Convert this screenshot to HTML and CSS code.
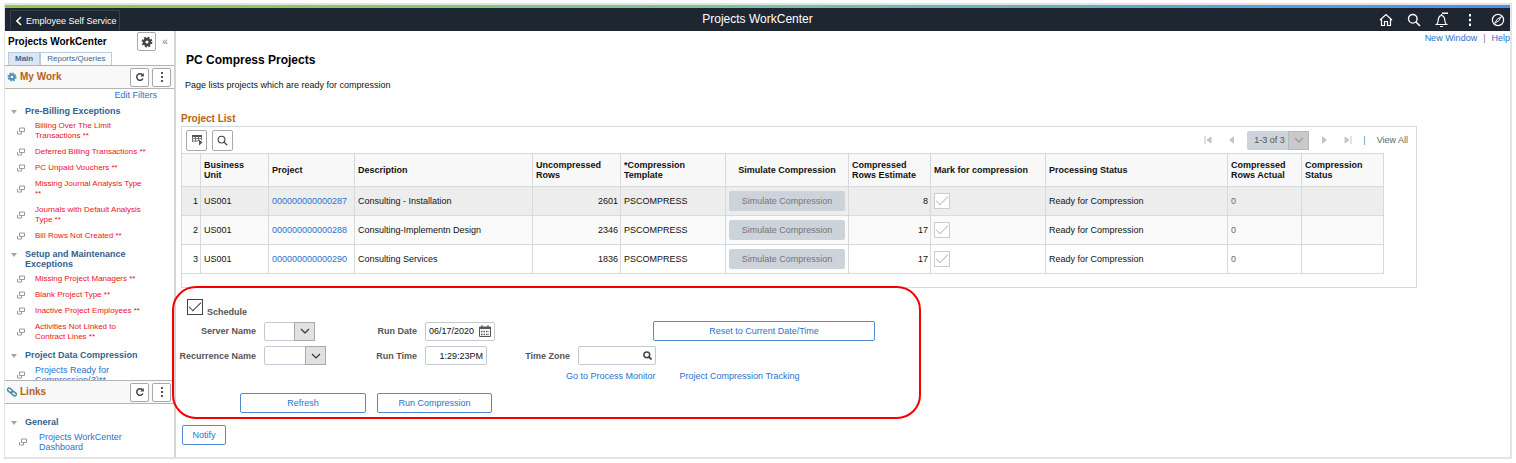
FILE: index.html
```html
<!DOCTYPE html>
<html lang="en">
<head>
    <meta charset="UTF-8">
    <meta name="viewport" content="width=device-width, initial-scale=1.0">
    <title>Projects WorkCenter</title>
    <link rel="stylesheet" href="styles.css">
</head>
<body>
    <!-- Shared icons -->
    <svg class="defs" width="0" height="0">
        <symbol id="related" viewBox="0 0 8 8"><path d="M2.500 1h5v3.500h-5z M.5 4v3h4V5" fill="none" stroke="#999"/></symbol>
        <symbol id="reload" viewBox="0 0 10 10"><path d="M8 6.500A3.300 3.300 0 1 1 7.500 2.800" fill="none" stroke="#444" stroke-width="1.500"/><path d="M8.800 1v3.600H5.200z" fill="#444"/></symbol>
        <symbol id="dots" viewBox="0 0 10 10"><path d="M4 0h2v2H4zM4 4h2v2H4zM4 8h2v2H4z" fill="#555"/></symbol>
        <symbol id="chevron" viewBox="0 0 10 6"><path d="M1 1l4 4 4-4" fill="none" stroke="currentColor" stroke-width="1.200"/></symbol>
        <symbol id="gear" viewBox="0 0 12 12"><circle cx="6" cy="6" r="2.900" fill="none" stroke="currentColor" stroke-width="2.600"/><circle cx="6" cy="6" r="4.600" fill="none" stroke="currentColor" stroke-width="1.600" stroke-dasharray="2 1.610"/></symbol>
        <symbol id="search" viewBox="0 0 14 14"><circle cx="5.800" cy="5.800" r="4.300" fill="none" stroke="currentColor" stroke-width="1.400"/><path d="M9 9l4 4" stroke="currentColor" stroke-width="1.600"/></symbol>
    </svg>

    <div class="frame">
        <header class="banner">
            <button class="back" type="button">
                <svg width="6" height="10" viewBox="0 0 6 10"><path d="M5 1L1 5l4 4" fill="none" stroke="#fff" stroke-width="1.600"/></svg>
                Employee Self Service
            </button>
            <h1>Projects WorkCenter</h1>
            <nav class="tools">
                <button type="button" aria-label="Home"><svg width="14" height="14" viewBox="0 0 14 14"><path d="M1 7l6-5.500L13 7M2.500 6v6.500h3V8.500h3v4h3V6" fill="none" stroke="#fff" stroke-width="1.200"/></svg></button>
                <button type="button" aria-label="Search"><svg width="14" height="14"><use href="#search"/></svg></button>
                <button type="button" aria-label="Notifications"><svg width="14" height="16" viewBox="0 0 14 16"><path d="M1.500 12.500c2-1.500 1.500-4 2-6C4 4.500 5 3.500 6.500 3.500S9 4.500 9.500 6.500c.5 2 0 4.500 2 6zM5 14.500h3M6.500 2v1.500" fill="none" stroke="#fff" stroke-width="1.200"/><path d="M7 .5h6v1.500H7z" fill="#fff"/></svg></button>
                <button type="button" aria-label="Actions"><svg width="14" height="14" viewBox="0 0 14 14"><path d="M6 1h2v2.500H6zM6 5.700h2v2.500H6zM6 10.500h2V13H6z" fill="#fff"/></svg></button>
                <button type="button" aria-label="Navigator"><svg width="14" height="14" viewBox="0 0 14 14"><circle cx="7" cy="7" r="5.600" fill="none" stroke="#fff" stroke-width="1.200"/><path d="M10.300 3.700L7.800 7.800 3.700 10.300 6.200 6.200z" fill="none" stroke="#fff"/></svg></button>
            </nav>
        </header>

        <div class="workcenter">
            <aside class="sidebar">
                <div class="side-title">
                    <h2>Projects WorkCenter</h2>
                    <button class="icon-btn" type="button" aria-label="Settings"><svg width="12" height="12"><use href="#gear"/></svg></button>
                    <span class="collapse">«</span>
                </div>
                <div class="tabs">
                    <button class="tab active" type="button">Main</button>
                    <button class="tab" type="button">Reports/Queries</button>
                </div>

                <div class="panel-head">
                    <svg class="gear-blue" width="10" height="10"><use href="#gear"/></svg>
                    <h3>My Work</h3>
                    <button class="icon-btn" type="button" aria-label="Reload My Work"><svg width="10" height="10"><use href="#reload"/></svg></button>
                    <button class="icon-btn" type="button" aria-label="My Work options"><svg width="10" height="10"><use href="#dots"/></svg></button>
                </div>
                <div class="panel work">
                    <a class="edit-filters" href="#">Edit Filters</a>
                    <h4>Pre-Billing Exceptions</h4>
                    <ul>
                        <li><svg><use href="#related"/></svg><a href="#">Billing Over The Limit<br>Transactions **</a></li>
                        <li><svg><use href="#related"/></svg><a href="#">Deferred Billing Transactions **</a></li>
                        <li><svg><use href="#related"/></svg><a href="#">PC Unpaid Vouchers **</a></li>
                        <li><svg><use href="#related"/></svg><a href="#">Missing Journal Analysis Type<br>**</a></li>
                        <li><svg><use href="#related"/></svg><a href="#">Journals with Default Analysis<br>Type **</a></li>
                        <li><svg><use href="#related"/></svg><a href="#">Bill Rows Not Created **</a></li>
                    </ul>
                    <h4>Setup and Maintenance<br>Exceptions</h4>
                    <ul>
                        <li><svg><use href="#related"/></svg><a href="#">Missing Project Managers **</a></li>
                        <li><svg><use href="#related"/></svg><a href="#">Blank Project Type **</a></li>
                        <li><svg><use href="#related"/></svg><a href="#">Inactive Project Employees **</a></li>
                        <li><svg><use href="#related"/></svg><a href="#">Activities Not Linked to<br>Contract Lines **</a></li>
                    </ul>
                    <h4>Project Data Compression</h4>
                    <ul class="plain">
                        <li><svg><use href="#related"/></svg><a href="#">Projects Ready for<br>Compression(3)**</a></li>
                    </ul>
                </div>

                <div class="panel-head">
                    <svg width="10" height="10" viewBox="0 0 10 10"><g fill="none" stroke="#4b87a8" stroke-width="1.400"><rect x=".2" y="1.800" width="5.600" height="3.200" rx="1.600" transform="rotate(40 3 3.400)"/><rect x="4" y="5" width="5.600" height="3.200" rx="1.600" transform="rotate(40 6.800 6.600)"/></g></svg>
                    <h3>Links</h3>
                    <button class="icon-btn" type="button" aria-label="Reload Links"><svg width="10" height="10"><use href="#reload"/></svg></button>
                    <button class="icon-btn" type="button" aria-label="Links options"><svg width="10" height="10"><use href="#dots"/></svg></button>
                </div>
                <div class="panel links">
                    <h4>General</h4>
                    <ul class="plain indent">
                        <li><svg><use href="#related"/></svg><a href="#">Projects WorkCenter<br>Dashboard</a></li>
                    </ul>
                </div>
            </aside>

            <main>
                <div class="page-links">
                    <a href="#">New Window</a><span>|</span><a href="#">Help</a>
                </div>
                <h2 class="page-title">PC Compress Projects</h2>
                <p class="intro">Page lists projects which are ready for compression</p>

                <h3 class="list-title">Project List</h3>
                <section class="grid-box">
                    <div class="grid-bar">
                        <button class="icon-btn wide" type="button" aria-label="Grid actions"><svg width="12" height="12" viewBox="0 0 12 12"><path d="M1 4.500h9M1 7h6M1.500 2v6M4.500 2v6M7.500 2v5M10.500 2v4" stroke="#777" fill="none"/><path d="M1 1h10v2H1zM8 5.500v6l3.500-3z" fill="#555"/></svg></button>
                        <button class="icon-btn wide" type="button" aria-label="Find"><svg width="11" height="11"><use href="#search"/></svg></button>
                        <div class="pager">
                            <button type="button" disabled aria-label="First"><svg width="8" height="8"><path d="M1 0v8M7 1v6L3 4z" fill="#c4c4c4" stroke="#c4c4c4"/></svg></button>
                            <button type="button" disabled aria-label="Previous"><svg width="8" height="8"><path d="M6 0v8L1 4z" fill="#c4c4c4"/></svg></button>
                            <div class="select range">
                                <select aria-label="Rows" disabled><option>1-3 of 3</option></select>
                                <span><svg width="10" height="6"><use href="#chevron"/></svg></span>
                            </div>
                            <button type="button" disabled aria-label="Next"><svg width="8" height="8"><path d="M2 0v8l5-4z" fill="#c4c4c4"/></svg></button>
                            <button type="button" disabled aria-label="Last"><svg width="8" height="8"><path d="M7 0v8M1 1v6l4-3z" fill="#c4c4c4" stroke="#c4c4c4"/></svg></button>
                            <span class="bar">|</span>
                            <span class="view-all">View All</span>
                        </div>
                    </div>
                    <table>
                        <colgroup>
                            <col class="c-num"><col class="c-unit"><col class="c-project"><col class="c-desc"><col class="c-rows"><col class="c-template">
                            <col class="c-sim"><col class="c-est"><col class="c-mark"><col class="c-status"><col class="c-actual"><col class="c-comp">
                        </colgroup>
                        <thead>
                            <tr>
                                <th></th>
                                <th>Business<br>Unit</th>
                                <th>Project</th>
                                <th>Description</th>
                                <th>Uncompressed<br>Rows</th>
                                <th>*Compression<br>Template</th>
                                <th class="center">Simulate Compression</th>
                                <th>Compressed<br>Rows Estimate</th>
                                <th>Mark for compression</th>
                                <th>Processing Status</th>
                                <th>Compressed<br>Rows Actual</th>
                                <th>Compression<br>Status</th>
                            </tr>
                        </thead>
                        <tbody>
                            <tr>
                                <td class="num">1</td>
                                <td>US001</td>
                                <td><a href="#">000000000000287</a></td>
                                <td>Consulting - Installation</td>
                                <td class="num">2601</td>
                                <td>PSCOMPRESS</td>
                                <td><button class="simulate" type="button" disabled>Simulate Compression</button></td>
                                <td class="num">8</td>
                                <td><input type="checkbox" checked disabled aria-label="Mark row 1"></td>
                                <td>Ready for Compression</td>
                                <td class="muted">0</td>
                                <td></td>
                            </tr>
                            <tr>
                                <td class="num">2</td>
                                <td>US001</td>
                                <td><a href="#">000000000000288</a></td>
                                <td>Consulting-Implementn Design</td>
                                <td class="num">2346</td>
                                <td>PSCOMPRESS</td>
                                <td><button class="simulate" type="button" disabled>Simulate Compression</button></td>
                                <td class="num">17</td>
                                <td><input type="checkbox" checked disabled aria-label="Mark row 2"></td>
                                <td>Ready for Compression</td>
                                <td class="muted">0</td>
                                <td></td>
                            </tr>
                            <tr>
                                <td class="num">3</td>
                                <td>US001</td>
                                <td><a href="#">000000000000290</a></td>
                                <td>Consulting Services</td>
                                <td class="num">1836</td>
                                <td>PSCOMPRESS</td>
                                <td><button class="simulate" type="button" disabled>Simulate Compression</button></td>
                                <td class="num">17</td>
                                <td><input type="checkbox" checked disabled aria-label="Mark row 3"></td>
                                <td>Ready for Compression</td>
                                <td class="muted">0</td>
                                <td></td>
                            </tr>
                        </tbody>
                    </table>
                </section>

                <form class="schedule">
                    <div class="schedule-check">
                        <input type="checkbox" id="schedule" checked>
                        <label for="schedule">Schedule</label>
                    </div>
                    <div class="fields">
                        <label for="server">Server Name</label>
                        <div class="select server">
                            <select id="server"><option></option></select>
                            <span><svg width="10" height="6"><use href="#chevron"/></svg></span>
                        </div>
                        <label for="runDate">Run Date</label>
                        <div class="field date">
                            <input type="text" id="runDate" value="06/17/2020">
                            <svg width="12" height="12" viewBox="0 0 12 12"><path d="M.5 2h11v9.500H.5zM3 0v2M9 0v2" fill="none" stroke="#555"/><path d="M1 2h10v2H1z" fill="#555"/><path d="M2 6.500h8M2 9.500h8" stroke="#555" stroke-width="1.500" stroke-dasharray="1.500 1"/></svg>
                        </div>
                        <button class="btn reset" type="button">Reset to Current Date/Time</button>

                        <label for="recurrence">Recurrence Name</label>
                        <div class="select recurrence">
                            <select id="recurrence"><option></option></select>
                            <span><svg width="10" height="6"><use href="#chevron"/></svg></span>
                        </div>
                        <label for="runTime">Run Time</label>
                        <div class="field time"><input type="text" id="runTime" value="1:29:23PM"></div>
                        <label for="zone">Time Zone</label>
                        <div class="field zone">
                            <input type="text" id="zone">
                            <svg width="9" height="9" viewBox="0 0 9 9"><circle cx="3.800" cy="3.800" r="2.900" fill="none" stroke="#444" stroke-width="1.500"/><path d="M6 6l2.500 2.500" stroke="#444" stroke-width="1.800"/></svg>
                        </div>
                    </div>
                    <div class="process-links">
                        <a href="#">Go to Process Monitor</a>
                        <a href="#">Project Compression Tracking</a>
                    </div>
                    <div class="actions">
                        <button class="btn refresh" type="button">Refresh</button>
                        <button class="btn run" type="button">Run Compression</button>
                    </div>
                </form>
                <button class="btn notify" type="button">Notify</button>
            </main>
        </div>
    </div>
</body>
</html>
```
FILE: styles.css
```css
* {
    box-sizing: border-box;
}
body {
    font-family: "Liberation Sans", Arial, sans-serif;
    font-size: 9px;
    line-height: 10px;
    color: #111;
    background: white;
    margin: 0;
}
h1, h2, h3, h4, p, ul {
    margin: 0;
    padding: 0;
}
button, input, select {
    font: inherit;
    color: inherit;
    margin: 0;
}
button {
    padding: 0;
    border: none;
    background: none;
    cursor: pointer;
}
a {
    color: #2a72cc;
    text-decoration: none;
}
svg {
    display: block;
    flex: none;
}
.defs {
    position: absolute;
}
.frame {
    margin: 3px 4px 4px;
    border: 2px solid #e4e4e4;
    border-left-width: 1px;
    overflow: hidden;
}

/* Top banner */
.banner {
    display: grid;
    grid-template-columns: 1fr auto 1fr;
    height: 26px;
    padding: 0 5px;
    background: #1e2631;
    border-top: 3px solid;
    border-image: linear-gradient(to right, #8fce46, #7cc3a0 50%, #4a90ef) 1;
}
.banner h1 {
    font-size: 12px;
    font-weight: normal;
    line-height: 22px;
    color: white;
}
.back {
    display: flex;
    align-items: center;
    gap: 4px;
    justify-self: start;
    width: 110px;
    margin-top: 2px;
    padding-left: 5px;
    border: 1px solid #36424e;
    border-bottom: none;
    border-radius: 2px;
    color: white;
    white-space: nowrap;
}
.tools {
    display: flex;
    align-items: center;
    justify-content: flex-end;
    gap: 14px;
    color: white;
}

/* Sidebar */
.workcenter {
    display: flex;
    min-height: 426px;
}
.sidebar {
    display: flex;
    flex-direction: column;
    flex: none;
    width: 171px;
    border-right: 2px solid #d4d4d4;
}
.side-title {
    display: flex;
    align-items: center;
    height: 21px;
    padding-left: 3px;
}
.side-title h2 {
    flex: 1;
    font-size: 10px;
    color: black;
}
.icon-btn {
    display: flex;
    align-items: center;
    justify-content: center;
    width: 19px;
    height: 19px;
    border: 1px solid #a5aab0;
    border-radius: 2px;
    background: white;
    color: #444;
}
.collapse {
    width: 18px;
    color: #777;
    font-size: 10px;
    text-align: center;
}
.tabs {
    display: flex;
    height: 13px;
    padding-left: 3px;
}
.tab {
    font-size: 8px;
    padding: 0 6px;
    border: 1px solid #b8cbe0;
    border-bottom: none;
    color: #43668c;
    background: #fbfcfe;
}
.tab.active {
    font-weight: bold;
    background: #dce6f2;
}
.panel-head {
    display: flex;
    align-items: center;
    gap: 3px;
    flex: none;
    height: 24px;
    padding: 0 3px 0 2px;
    border-top: 1px solid #b4b4b4;
    border-bottom: 1px solid #b4b4b4;
    background: #f8f8f8;
}
.gear-blue {
    color: #5192b5;
}
.panel-head h3 {
    flex: 1;
    font-size: 10px;
    color: #b5621b;
}
.panel {
    overflow: hidden;
}
.work {
    height: 291px;
    padding-top: 1px;
}
.edit-filters {
    display: block;
    padding: 0 17px 6px 0;
    text-align: right;
}
.panel h4 {
    display: flex;
    padding-left: 6px;
    margin-bottom: 2px;
    font-size: 9px;
    color: #35618f;
}
.panel h4::before {
    content: "";
    flex: none;
    width: 0;
    margin: 4px 8px 0 0;
    border: 3px solid transparent;
    border-top: 4px solid #aaa890;
    border-bottom: none;
    height: 0;
}
.panel ul {
    margin-bottom: 5px;
    list-style: none;
}
.panel li {
    display: flex;
    align-items: center;
    gap: 10px;
    padding: 3px 0 3px 12px;
    font-size: 8px;
}
.panel li svg {
    width: 8px;
    height: 8px;
}
.panel li a {
    color: #ee1122;
}
.panel .plain li {
    font-size: 9px;
}
.panel .plain a {
    color: #2a72cc;
}
.panel .indent {
    margin-bottom: 0;
}
.panel .indent li {
    gap: 12px;
    padding-left: 14px;
}
.links {
    padding-top: 13px;
}

/* Main page */
main {
    flex: 1;
    min-width: 0;
    padding-left: 5px;
}
.page-links {
    display: flex;
    justify-content: flex-end;
    gap: 6px;
    padding-top: 2px;
}
.page-links span {
    color: #976d7a;
}
.page-title {
    padding: 8px 5px 0;
    font-size: 12px;
    line-height: 18px;
    color: black;
}
.intro {
    padding: 11px 4px 0;
}
.list-title {
    padding-top: 24px;
    margin-bottom: 2px;
    font-size: 10px;
    color: #b5621b;
}
.grid-box {
    margin-right: 93px;
    padding-bottom: 13px;
    border: 1px solid #d5dae0;
}
.grid-bar {
    display: flex;
    align-items: center;
    gap: 5px;
    height: 26px;
    padding: 0 8px 0 4px;
}
.icon-btn.wide {
    width: 21px;
    height: 21px;
}
.pager {
    display: flex;
    align-items: center;
    gap: 11px;
    margin-left: auto;
    color: #666;
}
.pager button + button {
    margin-left: 5px;
}
.bar {
    color: #5a8f9a;
}
.select {
    display: flex;
    height: 19px;
    border: 1px solid #c3c9d2;
    border-radius: 2px;
    color: #333;
    background: white;
    position: relative;
}
.select select {
    width: 100%;
    padding: 0 0 0 6px;
    border: none;
    background: transparent;
    appearance: none;
}
.select span {
    position: absolute;
    top: -1px;
    right: -1px;
    bottom: -1px;
    display: flex;
    align-items: center;
    justify-content: center;
    width: 21px;
    border: 1px solid #a9a9a9;
    background: #e1e1e1;
    pointer-events: none;
}
.select.range {
    width: 62px;
    border-color: #cdd3da;
    background: #cdd3da;
    color: #666;
}
.select.range select {
    opacity: 1;
    color: #555;
}
.select.range span {
    border-color: #b8b8b8;
    background: #c9c9c9;
    color: #999;
}
table {
    width: calc(100% - 33px);
    margin-left: -1px;
    border-collapse: collapse;
    table-layout: fixed;
}
.c-num { width: 19px; }
.c-unit { width: 68px; }
.c-project { width: 86px; }
.c-desc { width: 178px; }
.c-rows { width: 88px; }
.c-template { width: 105px; }
.c-sim { width: 123px; }
.c-est { width: 82px; }
.c-mark { width: 115px; }
.c-status { width: 182px; }
.c-actual { width: 74px; }
.c-comp { width: 82px; }
th, td {
    padding: 0 3px;
    border: 1px solid #d5dae0;
    text-align: left;
    white-space: nowrap;
}
th {
    height: 33px;
    background: #f8f8f8;
}
th.center {
    text-align: center;
}
td {
    height: 29px;
}
tbody tr:nth-child(1) {
    background: #ededed;
}
tbody tr:nth-child(2) {
    background: #fafafa;
}
.num {
    text-align: right;
    padding-right: 2px;
}
.muted {
    color: #666;
}
.simulate {
    display: block;
    width: 100%;
    height: 20px;
    border-radius: 2px;
    background: #cdd3da;
    color: #70767d;
}
input[type="checkbox"] {
    appearance: none;
    display: flex;
    align-items: center;
    justify-content: center;
    width: 16px;
    height: 16px;
    border: 1px solid #444;
    background: white;
    color: #333;
}
input[type="checkbox"]:checked::before {
    content: "";
    width: 11px;
    height: 5px;
    margin-bottom: 4px;
    border: solid;
    border-width: 0 0 1px 1px;
    transform: rotate(-45deg);
}
input[type="checkbox"]:disabled {
    border-color: #ccc;
    color: #bbb;
}

/* Schedule options */
.schedule {
    position: relative;
    width: 749px;
    margin: -2px 0 6px -9px;
    padding: 11px 0 4px;
    border: 2px solid #f40000;
    border-radius: 24px;
    color: #555;
}
.schedule label {
    font-weight: bold;
}
.schedule-check {
    display: flex;
    align-items: flex-end;
    gap: 4px;
    height: 18px;
    padding-left: 13px;
}
.schedule-check input {
    align-self: flex-start;
}
.fields {
    display: grid;
    grid-template-columns: 82px 62px 83px 70px 67px 297px;
    align-items: center;
    gap: 5px 8px;
    padding-top: 4px;
}
.fields label {
    text-align: right;
    white-space: nowrap;
}
.select.server {
    width: 51px;
}
.select.recurrence {
    width: 62px;
}
.field {
    display: flex;
    align-items: center;
    height: 19px;
    padding: 0 3px;
    border: 1px solid #c3c9d2;
    border-radius: 2px;
    color: #111;
}
.field input {
    flex: 1;
    min-width: 0;
    padding: 0;
    border: none;
    outline: none;
    background: none;
}
.field.time {
    width: 62px;
}
.field.time input {
    text-align: right;
}
.field.zone {
    width: 78px;
}
.btn {
    display: block;
    height: 20px;
    border: 1px solid #4e8bd4;
    border-radius: 2px;
    background: white;
    color: #2a72cc;
}
.reset {
    grid-column: 5 / 7;
    justify-self: end;
    width: 222px;
}
.process-links {
    display: flex;
    gap: 24px;
    padding: 6px 0 12px 392px;
}
.actions {
    display: flex;
    gap: 11px;
    padding-left: 66px;
}
.refresh {
    width: 126px;
}
.run {
    width: 115px;
}
.notify {
    width: 44px;
    margin-left: 1px;
}
```
